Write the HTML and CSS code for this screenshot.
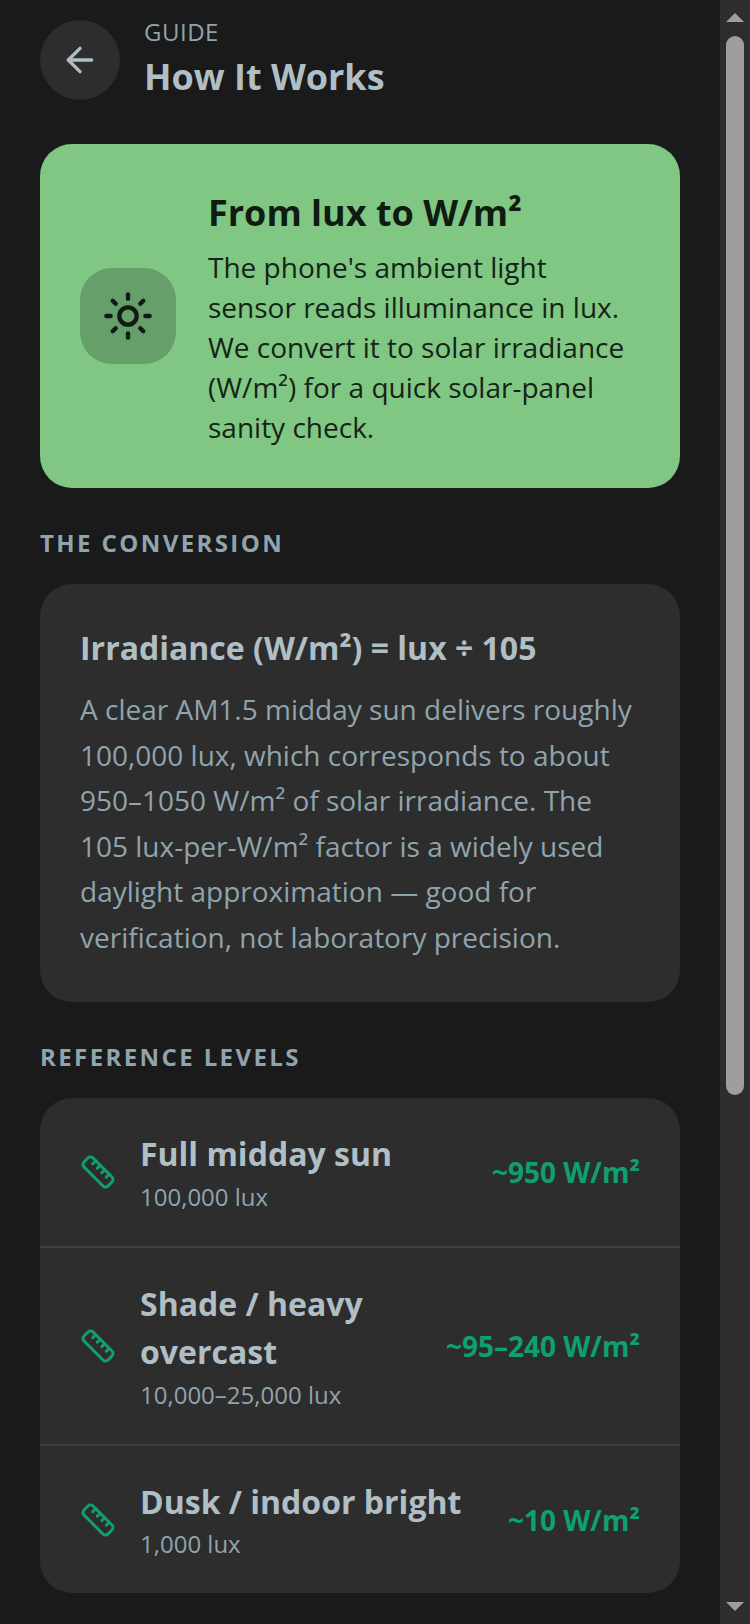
FILE: index.html
```html
<!DOCTYPE html>
<html lang="en">
<head>
    <meta charset="UTF-8">
    <meta name="viewport" content="width=device-width, initial-scale=1.0">
    <title>How It Works</title>
    <link rel="stylesheet" href="styles.css">
</head>
<body>
    <div class="screen">
        <main class="content">
            <header class="top-bar">
                <div class="back-btn">
                    <svg width="40" height="40" viewBox="0 0 24 24" fill="none" stroke="#b0bec5" stroke-width="2" stroke-linecap="round" stroke-linejoin="round"><path d="m12 19-7-7 7-7"/><path d="M19 12H5"/></svg>
                </div>
                <div class="top-titles">
                    <div class="eyebrow">GUIDE</div>
                    <h1 class="page-title">How It Works</h1>
                </div>
            </header>

            <section class="hero">
                <div class="hero-icon">
                    <svg width="52" height="52" viewBox="0 0 24 24" fill="none" stroke="#101c11" stroke-width="2" stroke-linecap="round" stroke-linejoin="round"><circle cx="12" cy="12" r="4"/><path d="M12 2v2"/><path d="M12 20v2"/><path d="m4.930 4.930 1.410 1.410"/><path d="m17.660 17.660 1.410 1.410"/><path d="M2 12h2"/><path d="M20 12h2"/><path d="m6.340 17.660-1.410 1.410"/><path d="m19.070 4.930-1.410 1.410"/></svg>
                </div>
                <div class="hero-text">
                    <h2 class="hero-title">From lux to W/m²</h2>
                    <p class="hero-body">The phone's ambient light sensor reads illuminance in lux. We convert it to solar irradiance (W/m²) for a quick solar-panel sanity check.</p>
                </div>
            </section>

            <h3 class="section-label">THE CONVERSION</h3>
            <section class="card formula">
                <div class="formula-title">Irradiance (W/m²) = lux ÷ 105</div>
                <p class="formula-body">A clear AM1.5 midday sun delivers roughly 100,000 lux, which corresponds to about 950–1050 W/m² of solar irradiance. The 105 lux-per-W/m² factor is a widely used daylight approximation — good for verification, not laboratory precision.</p>
            </section>

            <h3 class="section-label">REFERENCE LEVELS</h3>
            <section class="card levels">
                <div class="level">
                    <svg class="ruler" width="36" height="36" viewBox="0 0 24 24" fill="none" stroke="#0fa06f" stroke-width="2" stroke-linecap="round" stroke-linejoin="round"><path d="M21.300 15.300a2.400 2.400 0 0 1 0 3.400l-2.600 2.600a2.400 2.400 0 0 1-3.400 0L2.700 8.700a2.410 2.410 0 0 1 0-3.400l2.600-2.600a2.410 2.410 0 0 1 3.400 0Z"/><path d="m14.500 12.500 2-2"/><path d="m11.500 9.500 2-2"/><path d="m8.500 6.500 2-2"/><path d="m17.500 15.500 2-2"/></svg>
                    <div class="level-text">
                        <div class="level-name">Full midday sun</div>
                        <div class="level-lux">100,000 lux</div>
                    </div>
                    <div class="level-value">~950 W/m²</div>
                </div>
                <div class="level">
                    <svg class="ruler" width="36" height="36" viewBox="0 0 24 24" fill="none" stroke="#0fa06f" stroke-width="2" stroke-linecap="round" stroke-linejoin="round"><path d="M21.300 15.300a2.400 2.400 0 0 1 0 3.400l-2.600 2.600a2.400 2.400 0 0 1-3.400 0L2.700 8.700a2.410 2.410 0 0 1 0-3.400l2.600-2.600a2.410 2.410 0 0 1 3.400 0Z"/><path d="m14.500 12.500 2-2"/><path d="m11.500 9.500 2-2"/><path d="m8.500 6.500 2-2"/><path d="m17.500 15.500 2-2"/></svg>
                    <div class="level-text">
                        <div class="level-name">Shade / heavy overcast</div>
                        <div class="level-lux">10,000–25,000 lux</div>
                    </div>
                    <div class="level-value">~95–240 W/m²</div>
                </div>
                <div class="level">
                    <svg class="ruler" width="36" height="36" viewBox="0 0 24 24" fill="none" stroke="#0fa06f" stroke-width="2" stroke-linecap="round" stroke-linejoin="round"><path d="M21.300 15.300a2.400 2.400 0 0 1 0 3.400l-2.600 2.600a2.400 2.400 0 0 1-3.400 0L2.700 8.700a2.410 2.410 0 0 1 0-3.400l2.600-2.600a2.410 2.410 0 0 1 3.400 0Z"/><path d="m14.500 12.500 2-2"/><path d="m11.500 9.500 2-2"/><path d="m8.500 6.500 2-2"/><path d="m17.500 15.500 2-2"/></svg>
                    <div class="level-text">
                        <div class="level-name">Dusk / indoor bright</div>
                        <div class="level-lux">1,000 lux</div>
                    </div>
                    <div class="level-value">~10 W/m²</div>
                </div>
            </section>
        </main>

        <aside class="scrollbar">
            <div class="arrow-up"></div>
            <div class="thumb"></div>
            <div class="arrow-down"></div>
        </aside>
    </div>
</body>
</html>
```
FILE: styles.css
```css
body, html {
    margin: 0;
    padding: 0;
    height: 100%;
    overflow: hidden;
    background-color: #1a1a1a;
    font-family: "Open Sans", "Noto Sans", sans-serif;
}
h1, h2, h3, p {
    margin: 0;
}
.screen {
    display: flex;
    height: 1624px;
}
.content {
    width: 720px;
    box-sizing: border-box;
    padding: 20px 40px 0;
    overflow: hidden;
}
.top-bar {
    display: flex;
    align-items: center;
    gap: 24px;
    height: 80px;
}
.back-btn {
    width: 80px;
    height: 80px;
    border-radius: 50%;
    background-color: #2d2d2d;
    display: flex;
    align-items: center;
    justify-content: center;
}
.eyebrow {
    font-size: 24px;
    line-height: 24px;
    letter-spacing: 0.5px;
    color: #90a4ae;
}
.page-title {
    font-size: 36px;
    line-height: 48px;
    font-weight: 700;
    color: #b0bec5;
    margin-top: 9px;
}
.hero {
    margin-top: 44px;
    height: 344px;
    box-sizing: border-box;
    background-color: #81c784;
    border-radius: 32px;
    padding: 0 40px;
    display: flex;
    align-items: center;
    gap: 32px;
}
.hero-icon {
    flex: none;
    width: 96px;
    height: 96px;
    border-radius: 32px;
    background-color: #679f6a;
    display: flex;
    align-items: center;
    justify-content: center;
}
.hero-text {
    padding-top: 3px;
}
.hero-title {
    font-size: 36px;
    line-height: 50px;
    font-weight: 700;
    color: #101c11;
}
.hero-body {
    margin-top: 9px;
    font-size: 28px;
    line-height: 40px;
    color: #142416;
}
.section-label {
    margin: 39px 0 25px;
    font-size: 24px;
    line-height: 32px;
    font-weight: 700;
    letter-spacing: 2.4px;
    color: #90a4ae;
}
.card {
    background-color: #2d2d2d;
    border-radius: 32px;
}
.formula {
    padding: 42px 40px 0;
    height: 418px;
    box-sizing: border-box;
}
.formula-title {
    font-size: 32px;
    line-height: 44px;
    font-weight: 700;
    color: #b0bec5;
}
.formula-body {
    margin-top: 17px;
    font-size: 28px;
    line-height: 45.600px;
    color: #90a4ae;
}
.levels {
    height: 495px;
    overflow: hidden;
}
.level {
    display: flex;
    align-items: center;
    gap: 24px;
    padding: 32px 40px;
    border-bottom: 2px solid #3f3f3f;
}
.level:last-child {
    border-bottom: none;
}
.ruler {
    flex: none;
}
.level-text {
    flex: 1;
}
.level-name {
    font-size: 32px;
    line-height: 48.600px;
    font-weight: 700;
    color: #b0bec5;
}
.level-lux {
    margin-top: 1px;
    font-size: 24px;
    line-height: 34px;
    color: #90a4ae;
}
.level-value {
    flex: none;
    font-size: 28px;
    font-weight: 700;
    color: #0fa06f;
}
.scrollbar {
    position: relative;
    width: 30px;
    background-color: #2d2d2d;
}
.thumb {
    position: absolute;
    top: 36px;
    left: 6px;
    width: 18px;
    height: 1059px;
    border-radius: 9px;
    background-color: #9e9e9e;
}
.arrow-up, .arrow-down {
    position: absolute;
    left: 6px;
    width: 0;
    height: 0;
    border-left: 9px solid transparent;
    border-right: 9px solid transparent;
}
.arrow-up {
    top: 13px;
    border-bottom: 9px solid #9e9e9e;
}
.arrow-down {
    bottom: 13px;
    border-top: 9px solid #9e9e9e;
}
```
